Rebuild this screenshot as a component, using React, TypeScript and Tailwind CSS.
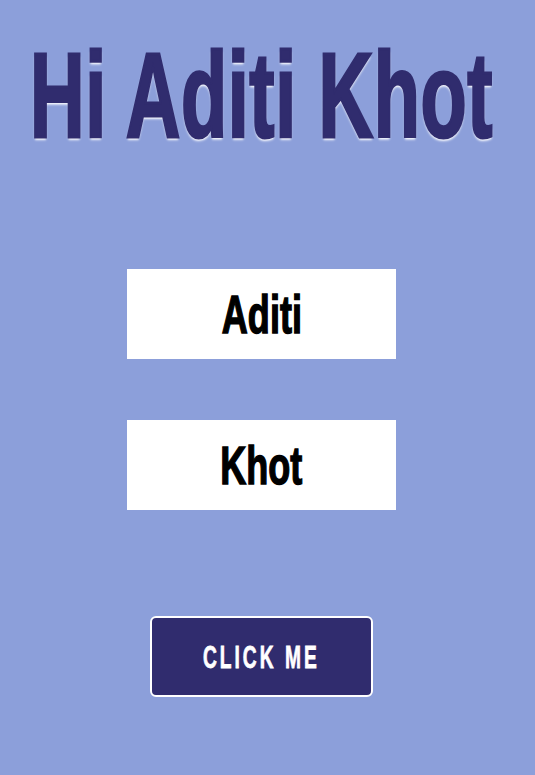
import React from 'react';

const anton = { fontFamily: '"Liberation Sans", Arial, sans-serif' };

export default function App() {
  return (
    <div className="min-h-[775px] w-full bg-[#8c9fda] flex flex-col items-center pr-[12px]">
      {/* Greeting */}
      <h1
        style={anton}
        className="mt-[30px] h-[130px] flex items-center whitespace-nowrap text-[120px] font-bold leading-none text-[#302c6e] tracking-[1px] scale-x-[0.63] [-webkit-text-stroke:3px_#302c6e] [text-shadow:0_3px_3px_#ffffff]"
      >
        Hi Aditi Khot
      </h1>

      {/* Name fields */}
      <div className="mt-[109px] flex flex-col gap-[61px]">
        {['Aditi', 'Khot'].map((name) => (
          <div key={name} className="w-[269px] h-[90px] bg-white flex items-center justify-center">
            <span style={anton} className="text-[53px] font-bold leading-none text-black scale-x-[0.68] [-webkit-text-stroke:1.5px_black]">
              {name}
            </span>
          </div>
        ))}
      </div>

      {/* Button */}
      <button className="mt-[106px] w-[223px] h-[81px] rounded-[6px] border-2 border-white bg-[#302c6e] flex items-center justify-center">
        <span style={anton} className="text-[32px] font-bold leading-none text-white tracking-[5px] scale-x-[0.6] [-webkit-text-stroke:0.8px_white]">
          CLICK ME
        </span>
      </button>
    </div>
  );
}
